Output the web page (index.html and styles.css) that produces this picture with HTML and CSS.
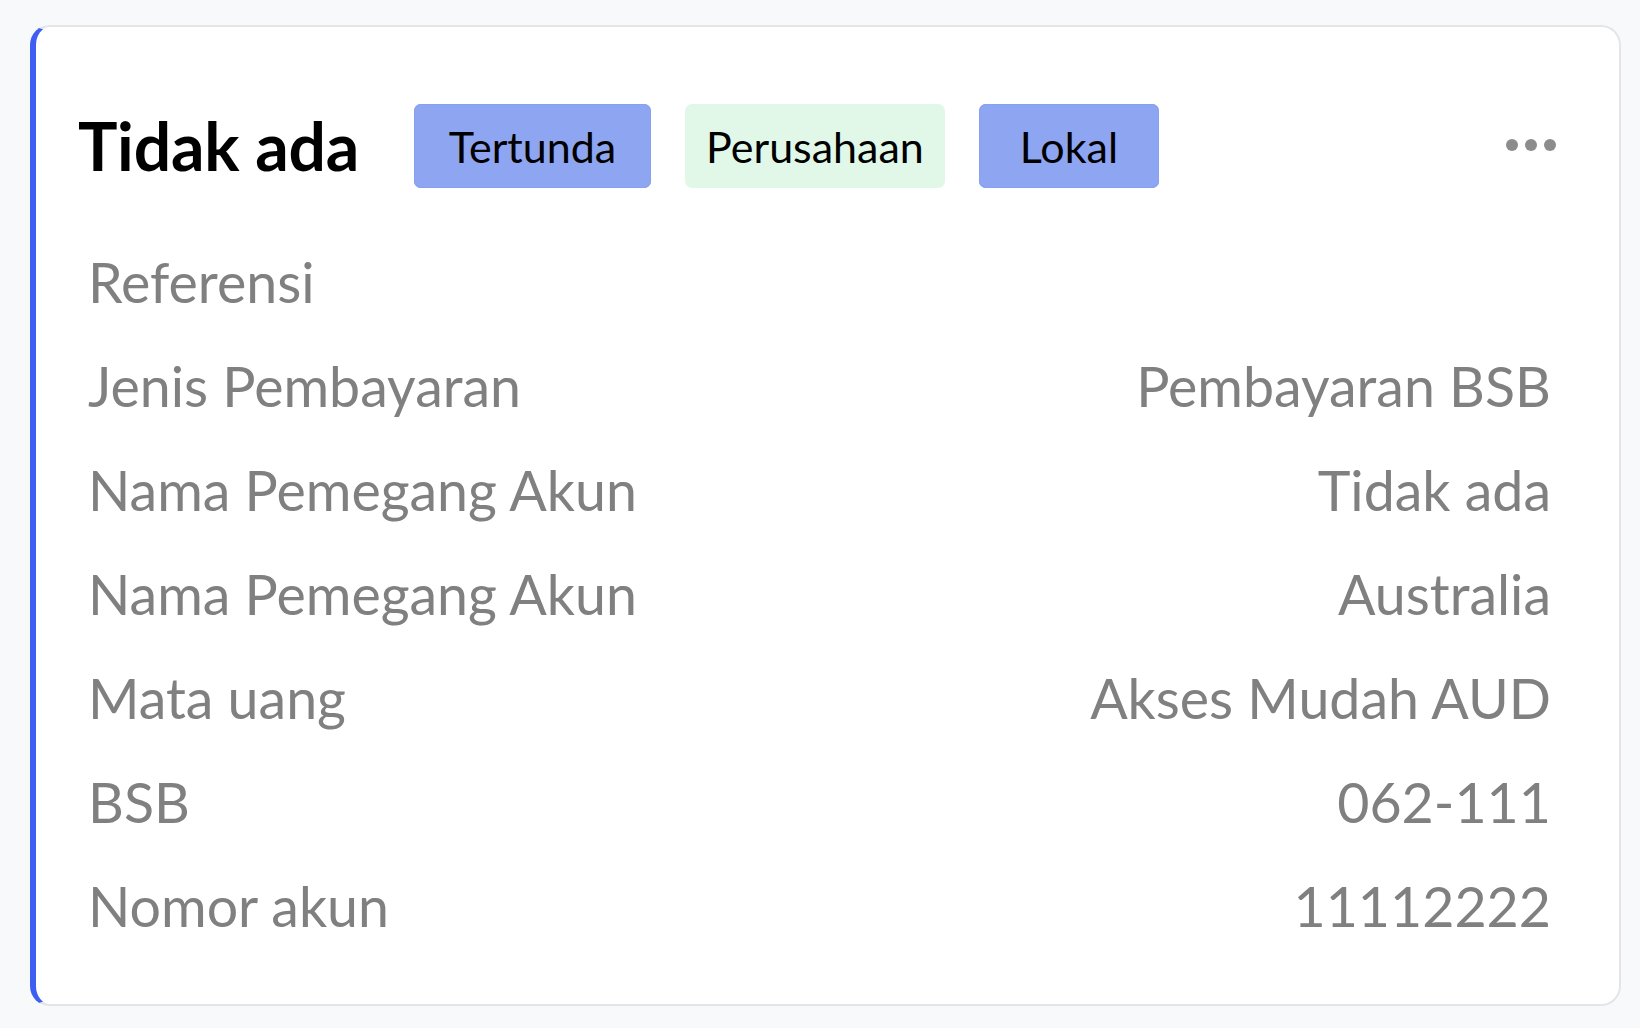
FILE: index.html
```html
<!DOCTYPE html>
<html lang="id">
<head>
<meta charset="utf-8">
<title>Detail Pembayaran</title>
<link rel="stylesheet" href="styles.css">
</head>
<body>
<div class="page">
  <div class="card">
    <div class="card-header">
      <h1 class="title">Tidak ada</h1>
      <div class="badges">
        <span class="badge badge-blue badge-tertunda">Tertunda</span>
        <span class="badge badge-green badge-perusahaan">Perusahaan</span>
        <span class="badge badge-blue badge-lokal">Lokal</span>
      </div>
      <button class="more" aria-label="Lainnya">
        <span class="dot"></span><span class="dot"></span><span class="dot"></span>
      </button>
    </div>
    <div class="rows">
      <div class="row"><span class="label">Referensi</span><span class="value"></span></div>
      <div class="row"><span class="label">Jenis Pembayaran</span><span class="value">Pembayaran BSB</span></div>
      <div class="row"><span class="label">Nama Pemegang Akun</span><span class="value">Tidak ada</span></div>
      <div class="row"><span class="label">Nama Pemegang Akun</span><span class="value">Australia</span></div>
      <div class="row"><span class="label">Mata uang</span><span class="value">Akses Mudah AUD</span></div>
      <div class="row"><span class="label">BSB</span><span class="value">062-111</span></div>
      <div class="row"><span class="label">Nomor akun</span><span class="value">11112222</span></div>
    </div>
  </div>
</div>
</body>
</html>
```
FILE: styles.css
```css
html, body {
  margin: 0;
  padding: 0;
  background: #f8f9fb;
}

body {
  font-family: "Lato", "Open Sans", sans-serif;
  width: 1640px;
  height: 1028px;
  overflow: hidden;
}

.page {
  padding: 25px 19px 22px 30px;
}

.card {
  box-sizing: border-box;
  width: 1591px;
  height: 981px;
  background: #ffffff;
  border: 2px solid #e4e5e7;
  border-left: 6px solid #3d5ef0;
  border-radius: 20px;
  padding: 77px 63px 47px 42px;
  display: flex;
  flex-direction: column;
}

.card-header {
  display: flex;
  align-items: center;
  height: 84px;
}

.title {
  margin: 0;
  font-size: 66px;
  font-weight: 700;
  color: #000000;
  line-height: 1;
  letter-spacing: -0.2px;
}

.badges {
  display: flex;
  gap: 34px;
  margin-left: 55px;
}

.badge {
  box-sizing: border-box;
  height: 84px;
  display: flex;
  align-items: center;
  justify-content: center;
  font-size: 43px;
  color: #000000;
  border-radius: 7px;
}

.badge-blue {
  background: #8ea5f1;
  box-shadow: inset 0 0 0 1px #87a0ef;
}

.badge-green {
  background: #e1f8e9;
}

.badge-tertunda { width: 237px; }
.badge-perusahaan { width: 260px; }
.badge-lokal { width: 180px; }

.more {
  margin-left: auto;
  margin-top: -2px;
  background: none;
  border: 0;
  padding: 0;
  display: flex;
  gap: 7px;
  cursor: pointer;
}

.dot {
  width: 12px;
  height: 12px;
  border-radius: 50%;
  background: #8c8c8c;
}

.rows {
  margin-top: 42px;
  padding-left: 10px;
  padding-right: 5px;
}

.row {
  display: flex;
  justify-content: space-between;
  height: 104px;
  line-height: 104px;
  font-size: 55.5px;
  color: #808080;
}
```
